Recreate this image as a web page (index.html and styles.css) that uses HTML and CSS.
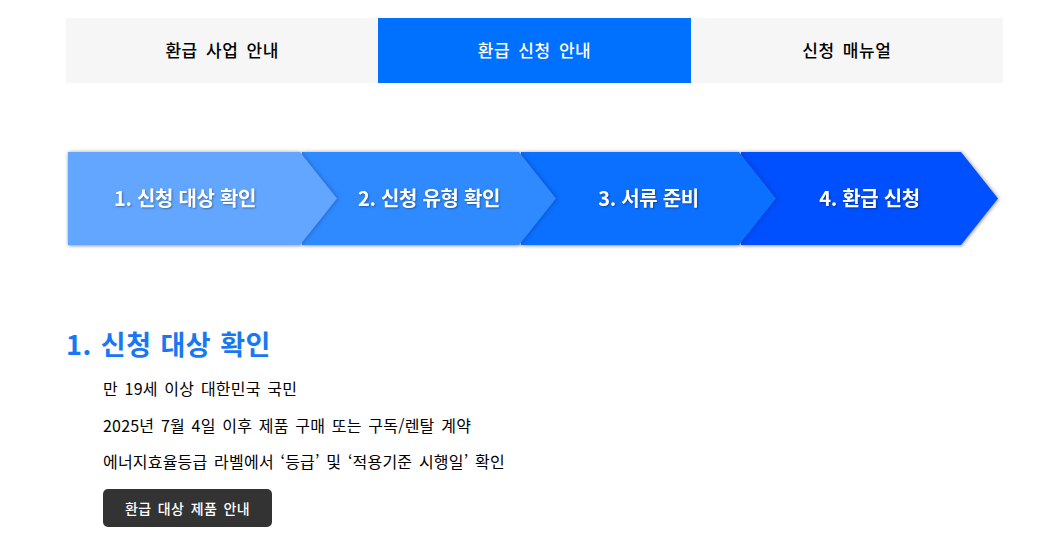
FILE: index.html
```html
<!DOCTYPE html>
<html lang="ko">
<head>
<meta charset="utf-8">
<title>환급 신청 안내</title>
<link rel="stylesheet" href="styles.css">
</head>
<body>
<div class="page">
  <nav class="tabs">
    <a class="tab">환급 사업 안내</a>
    <a class="tab active">환급 신청 안내</a>
    <a class="tab">신청 매뉴얼</a>
  </nav>

  <div class="steps">
    <div class="step s1"><div class="shape">1. 신청 대상 확인</div></div>
    <div class="step s2"><div class="shape">2. 신청 유형 확인</div></div>
    <div class="step s3"><div class="shape">3. 서류 준비</div></div>
    <div class="step s4"><div class="shape">4. 환급 신청</div></div>
  </div>

  <section class="section">
    <h2 class="title">1. 신청 대상 확인</h2>
    <ul class="list">
      <li>만 19세 이상 대한민국 국민</li>
      <li>2025년 7월 4일 이후 제품 구매 또는 구독/렌탈 계약</li>
      <li>에너지효율등급 라벨에서 ‘등급’ 및 ‘적용기준 시행일’ 확인</li>
    </ul>
    <a class="btn">환급 대상 제품 안내</a>
  </section>
</div>
</body>
</html>
```

FILE: styles.css
```css
* { box-sizing: border-box; }
html, body { margin: 0; padding: 0; background: #fff; }
body {
  font-family: "Noto Sans CJK KR", "Noto Sans", sans-serif;
  color: #111;
}
.page { padding: 18px 39px 0 66px; }

.tabs {
  display: flex;
  width: 937px;
  height: 65px;
}
.tab {
  flex: 1;
  display: flex;
  align-items: center;
  justify-content: center;
  background: #f6f6f6;
  font-size: 17px;
  font-weight: 500;
  color: #000;
  letter-spacing: 0.5px;
  word-spacing: 3px;
  padding-bottom: 2px;
}
.tab.active { background: #0070ff; color: #fff; }

.steps {
  display: flex;
  margin: 69px 0 0 2px;
  height: 93px;
  filter: drop-shadow(0 1px 1.5px rgba(0,0,0,0.25));
}
.step {
  position: relative;
  height: 93px;
  margin-left: -35px;
  filter: drop-shadow(1px 0 2px rgba(0,0,40,0.25));
}
.step .shape {
  height: 100%;
  display: flex;
  align-items: center;
  justify-content: center;
  padding: 0 35px 3px 35px;
  clip-path: polygon(0 0, calc(100% - 37px) 0, 100% 50%, calc(100% - 37px) 100%, 0 100%);
  color: #fff;
  font-size: 20px;
  font-weight: 700;
  letter-spacing: -0.3px;
  text-shadow: 1px 1px 2px rgba(0,0,0,0.35);
}
.s1 { width: 269px; margin-left: 0; z-index: 4; }
.s1 .shape { padding-left: 0; background: #62a6ff; }
.s2 { width: 254px; z-index: 3; }
.s2 .shape { background: #2f8aff; }
.s3 { width: 255px; z-index: 2; }
.s3 .shape { background: #0b6fff; }
.s4 { width: 257px; z-index: 1; }
.s4 .shape { background: #0050ff; }

.section { margin-top: 81px; }
.title {
  margin: 0;
  font-size: 27px;
  line-height: 36px;
  font-weight: 700;
  color: #1877f2;
  letter-spacing: 0.5px;
  word-spacing: 1px;
}
.list {
  list-style: none;
  margin: 8px 0 0 37px;
  padding: 0;
}
.list li {
  font-size: 16px;
  line-height: 36.5px;
  color: #000;
  letter-spacing: 0.2px;
  word-spacing: 2px;
}
.btn {
  display: inline-flex;
  align-items: center;
  justify-content: center;
  margin: 9px 0 0 37px;
  width: 169px;
  height: 38px;
  background: #333;
  border-radius: 5px;
  color: #fff;
  font-size: 14px;
  font-weight: 500;
  letter-spacing: 0.4px;
  word-spacing: 2px;
}
```
